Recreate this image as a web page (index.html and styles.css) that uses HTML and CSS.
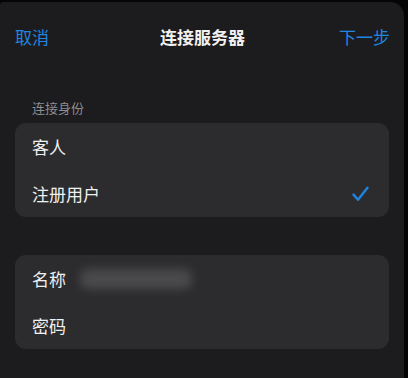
FILE: index.html
```html
<!DOCTYPE html>
<html lang="zh">
<head>
<meta charset="utf-8">
<link rel="stylesheet" href="styles.css">
</head>
<body>
<div class="sheet">
  <header class="nav">
    <span class="nav-btn">取消</span>
    <span class="nav-title">连接服务器</span>
    <span class="nav-btn nav-right">下一步</span>
  </header>
  <div class="section-label">连接身份</div>
  <div class="card">
    <div class="row">客人</div>
    <div class="row">注册用户
      <svg class="check" width="17" height="16" viewBox="0 0 17 16"><path d="M1.5 8.6 L6 13.8 L15.5 1.8" fill="none" stroke="#1f84e0" stroke-width="2.4" stroke-linecap="round" stroke-linejoin="round"/></svg>
    </div>
  </div>
  <div class="card card-2">
    <div class="row">名称<span class="blur"></span></div>
    <div class="row">密码</div>
  </div>
</div>
</body>
</html>
```
FILE: styles.css
```css
* { box-sizing: border-box; }
html, body { margin: 0; padding: 0; }
body {
  width: 408px;
  height: 378px;
  background: #050505;
  font-family: "Noto Sans CJK SC", "Noto Sans", sans-serif;
  overflow: hidden;
}
.sheet {
  width: 404px;
  height: 378px;
  margin-top: 2px;
  background: #1c1c1e;
  border-radius: 3px 14px 0 0;
  padding-top: 17px;
}
.nav {
  display: grid;
  grid-template-columns: 1fr auto 1fr;
  align-items: center;
  height: 36px;
  padding: 0 14px 0 15px;
}
.nav-btn {
  color: #2086e2;
  font-size: 17px;
  line-height: 36px;
}
.nav-right { justify-self: end; }
.nav-title {
  color: #f2f2f2;
  font-size: 17px;
  font-weight: 600;
  line-height: 36px;
}
.section-label {
  margin-top: 44px;
  padding-left: 32px;
  font-size: 13px;
  line-height: 18px;
  color: #8d8d92;
}
.card {
  margin: 6px 0 0 15px;
  width: 374px;
  background: #2c2c2e;
  border-radius: 11px;
}
.card-2 { margin-top: 38px; }
.row {
  position: relative;
  display: flex;
  align-items: center;
  height: 47px;
  padding-left: 17px;
  font-size: 17px;
  color: #f0f0f0;
}
.check {
  position: absolute;
  left: 337px;
  top: 16px;
}
.blur {
  display: block;
  width: 112px;
  height: 20px;
  margin-left: 14px;
  background: #4a4a4d;
  border-radius: 8px;
  filter: blur(5px);
}
```
